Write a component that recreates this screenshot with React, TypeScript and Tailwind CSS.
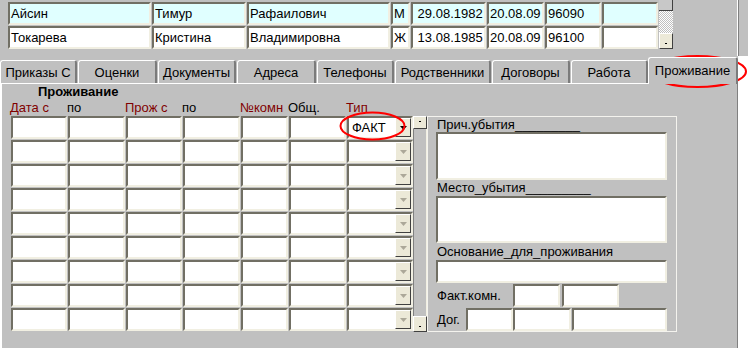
import React from 'react';

const font = "font-['Liberation_Sans',Arial,sans-serif]";
const inset =
  'border-2 border-t-[#716f64] border-l-[#716f64] border-b-[#f1efe2] border-r-[#f1efe2]';
const btn =
  'bg-[#ece9d8] border border-t-white border-l-white border-b-[#404040] border-r-[#404040]';

const people = [
  {
    bg: 'bg-[#e0ffff]',
    cells: ['Айсин', 'Тимур', 'Рафаилович', 'М', ' 29.08.1982', '20.08.09', '96090', ''],
  },
  {
    bg: 'bg-white',
    cells: ['Токарева', 'Кристина', 'Владимировна', 'Ж', ' 13.08.1985', '20.08.09', '96100', ''],
  },
];
const topWidths = ['w-[143px]', 'w-[94px]', 'w-[143px]', 'w-[19px]', 'w-[75px]', 'w-[57px]', 'w-[56px]', 'w-[56px]'];

const tabs = [
  { label: 'Приказы С', w: 'w-[77px]' },
  { label: 'Оценки', w: 'w-[79px]' },
  { label: 'Документы', w: 'w-[78px]' },
  { label: 'Адреса', w: 'w-[79px]' },
  { label: 'Телефоны', w: 'w-[77px]' },
  { label: 'Родственники', w: 'w-[96px]' },
  { label: 'Договоры', w: 'w-[78px]' },
  { label: 'Работа', w: 'w-[77px]' },
];

// columns of the "Проживание" grid
const cols = [
  { label: 'Дата с', red: true, w: 'w-[56px]' },
  { label: 'по', red: false, w: 'w-[57px]' },
  { label: 'Прож с', red: true, w: 'w-[56px]' },
  { label: 'по', red: false, w: 'w-[57px]' },
  { label: '№комн', red: true, w: 'w-[47px]' },
  { label: 'Общ.', red: false, w: 'w-[57px]' },
];

const rows = [0, 1, 2, 3, 4, 5, 6, 7, 8];

const Dot = () => <div className="w-[2px] h-[1px] bg-black mt-[4px]" />;

export default function App() {
  return (
    <div className={`relative w-[748px] h-[348px] overflow-hidden bg-[#c0c0c0] text-[13px] text-black ${font}`}>
      {/* top list of people */}
      <div className="flex h-[56px]">
        <div className="flex flex-col gap-[1px] pl-[8px] pt-[2px]">
          {people.map((p) => (
            <div key={p.cells[0]} className="flex gap-[1px] h-[23px]">
              {p.cells.map((c, i) => (
                <div
                  key={i}
                  className={`${topWidths[i]} ${inset} ${p.bg} flex items-center pl-[1px] whitespace-pre overflow-hidden leading-[15px]`}
                >
                  {c}
                </div>
              ))}
            </div>
          ))}
        </div>
        <div className="ml-[1px] w-[14px] h-[49px] flex flex-col">
          <div className="h-[11px] bg-[#c8c8c8] border-r border-b border-r-[#404040] border-b-[#404040]" />
          <div className="flex-1 bg-[repeating-conic-gradient(#ffffff_0%_25%,#c0c0c0_0%_50%)] bg-[length:2px_2px]" />
          <div className={`h-[16px] ${btn} flex justify-center items-center`}>
            <Dot />
          </div>
        </div>
        <div className="w-[64px]" />
        <div className="w-px bg-white" />
        <div className="w-px bg-[#808080]" />
        <div className="flex-1" />
      </div>

      <div className="flex">
        <div className="w-[738px] flex flex-col">
          {/* tabs */}
          <div className="flex items-end h-[27px]">
            {tabs.map((t) => (
              <div
                key={t.label}
                className={`${t.w} mr-[1px] h-[23px] rounded-t-[3px] border-t border-l border-r-2 border-t-white border-l-white border-r-[#7b7b7b] flex items-center justify-center leading-[15px]`}
              >
                {t.label}
              </div>
            ))}
            <div className="relative z-10 w-[90px] ml-[-1px] mb-[-1px] h-[27px] rounded-t-[3px] bg-[#c0c0c0] border-t border-l border-r-2 border-t-white border-l-white border-r-[#7b7b7b] flex items-center justify-center leading-[15px] pb-[1px]">
              Проживание
            </div>
          </div>

          {/* tab page */}
          <div className="h-[265px] border-t border-l-2 border-r border-t-white border-l-white border-r-[#808080]">
            <div className="h-[16px] leading-[16px] pl-[36px] font-bold">Проживание</div>
            <div className="flex gap-[1px] h-[16px] leading-[16px] pl-[8px]">
              {cols.map((c, i) => (
                <div key={i} className={`${c.w} ${c.red ? 'text-[#800000]' : ''}`}>
                  {c.label}
                </div>
              ))}
              <div className="w-[66px] text-[#800000]">Тип</div>
            </div>

            <div className="flex pl-[9px]">
              {/* grid */}
              <div className="flex flex-col gap-[1px]">
                {rows.map((r) => (
                  <div key={r} className="flex gap-[1px] h-[23px]">
                    {cols.map((c, i) => (
                      <div key={i} className={`${c.w} ${inset} bg-white`} />
                    ))}
                    <div className={`w-[66px] ${inset} bg-white flex`}>
                      <div className="flex-1 flex items-center pl-[3px] leading-[15px]">
                        {r === 0 ? 'ФАКТ' : ''}
                      </div>
                      <div className={`w-[16px] ${btn} border-b-[#716f64] border-r-[#716f64] flex items-center justify-center`}>
                        <svg width="7" height="4" viewBox="0 0 7 4">
                          <polygon points="0,0 7,0 3.5,4" fill={r === 0 ? '#000000' : '#aca899'} />
                        </svg>
                      </div>
                    </div>
                  </div>
                ))}
              </div>

              {/* scrollbar */}
              <div className="w-[14px] h-[216px] flex flex-col">
                <div className={`h-[13px] ${btn} flex justify-center`}>
                  <Dot />
                </div>
                <div className="flex-1 border-l border-r border-l-[#808080] border-r-[#f1efe2]" />
                <div className={`h-[16px] ${btn} flex justify-center items-center`}>
                  <Dot />
                </div>
              </div>

              {/* right panel */}
              <div className="w-[250px] h-[216px] border border-[#f4f3ee] pl-[8px] flex flex-col">
                <div className="h-[15px] leading-[15px] pl-[1px]">Прич.убытия_________</div>
                <div className={`w-[231px] h-[48px] ${inset} bg-white`} />
                <div className="h-[16px] leading-[16px] pl-[1px]">Место_убытия_________</div>
                <div className={`w-[231px] h-[47px] ${inset} bg-white`} />
                <div className="h-[17px] leading-[17px] pl-[1px]">Основание_для_проживания</div>
                <div className={`w-[231px] h-[23px] ${inset} bg-white`} />
                <div className="flex h-[23px] mt-[1px] items-center">
                  <div className="w-[77px] pl-[1px] leading-[15px]">Факт.комн.</div>
                  <div className={`w-[47px] h-full ${inset} bg-white`} />
                  <div className={`ml-[2px] w-[57px] h-full ${inset} bg-white`} />
                </div>
                <div className="flex h-[23px] mt-[1px] items-center">
                  <div className="w-[30px] pl-[1px] leading-[15px]">Дог.</div>
                  <div className={`w-[47px] h-full ${inset} bg-white`} />
                  <div className={`w-[58px] h-full ${inset} bg-white`} />
                  <div className={`ml-[1px] w-[95px] h-full ${inset} bg-white`} />
                </div>
              </div>
            </div>
          </div>
        </div>
        <div className="w-[10px] h-[292px] bg-white" />
      </div>

      {/* red annotation marks */}
      <svg className="absolute inset-0 pointer-events-none" width="748" height="348">
        <ellipse cx="697.5" cy="71.5" rx="48.5" ry="15.5" fill="none" stroke="#ff0000" strokeWidth="2" />
        <ellipse cx="372.5" cy="126" rx="32" ry="13.5" fill="none" stroke="#ff0000" strokeWidth="2" />
      </svg>
    </div>
  );
}
